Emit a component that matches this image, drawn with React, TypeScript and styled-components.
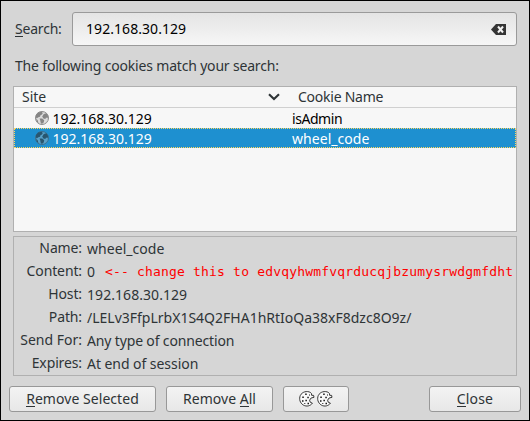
import React from "react";
import styled, { createGlobalStyle, css } from "styled-components";

const GlobalStyle = createGlobalStyle`
  * { box-sizing: border-box; }
  body { margin: 0; }
`;

const Dialog = styled.main`
  width: 530px;
  height: 421px;
  border: 1px solid #000;
  background: #d6d6d6;
  color: #2e3436;
  font: 14px/20px "Noto Sans", "Open Sans", sans-serif;
  display: flex;
  flex-direction: column;
  overflow: hidden;
  white-space: pre;
`;

const Text = styled.span<{ $track?: number }>`
  letter-spacing: ${(p) => p.$track ?? 0}px;
`;

const Key = styled.span`
  box-shadow: 0 1px 0 #2e3436;
  display: inline-block;
  height: 17px;
  line-height: 20px;
`;

const SearchRow = styled.label`
  display: flex;
  align-items: center;
  height: 34px;
  margin: 11px 12px 0 14px;
`;

const SearchLabel = styled.span`
  width: 57px;
  letter-spacing: -0.2px;
`;

const SearchField = styled.div`
  flex: 1;
  height: 34px;
  display: flex;
  align-items: center;
  justify-content: space-between;
  padding: 0 10px 0 13px;
  border: 1px solid #9a9a9a;
  border-radius: 3px;
  background: linear-gradient(#e4e4e4, #f6f6f6);
  color: #000;
`;

const Caption = styled.p`
  margin: 10px 0 11px 14px;
  height: 20px;
  letter-spacing: -0.18px;
`;

const Table = styled.section`
  width: 504px;
  height: 146px;
  margin: -1px 0 0 12px;
  border: 1px solid #b0b0b0;
  background: #f7f7f7;
`;

const columns = css`
  display: grid;
  grid-template-columns: 278px 1fr;
`;

const HeaderRow = styled.div`
  ${columns}
  height: 21px;
  border-bottom: 1px solid #d0d0d0;
`;

const HeaderCell = styled.div`
  display: flex;
  align-items: center;
  justify-content: space-between;
  padding: 0 12px 0 8px;

  & + & { padding-left: 6px; }
`;

const Row = styled.div<{ $selected?: boolean }>`
  ${columns}
  height: 20px;
  color: ${(p) => (p.$selected ? "#fff" : "#000")};
  background: ${(p) => (p.$selected ? "#1e90d0" : "transparent")};
  outline: ${(p) => (p.$selected ? "1px dotted #ffd75e" : "none")};
  outline-offset: -1px;

  ${Text} { margin-top: 1px; }
`;

const SiteCell = styled.div`
  display: flex;
  align-items: flex-start;
  gap: 3.5px;
  padding-left: 21px;

  svg { margin-top: 3px; }
`;

const Details = styled.dl`
  width: 504px;
  height: 140px;
  margin: 4px 0 0 12px;
  padding-top: 1px;
  border: 1px solid #b0b0b0;
`;

const Detail = styled.div`
  display: grid;
  grid-template-columns: 68px 1fr;
  column-gap: 5px;
  height: 23px;
`;

const Term = styled.dt`
  text-align: right;
`;

const Value = styled.dd`
  margin: 1px 0 0;
  display: flex;
`;

const Note = styled.span`
  margin-left: 10px;
  color: #f00;
  font: 13px/20px "DejaVu Sans Mono", monospace;
  letter-spacing: 0.18px;
`;

const Actions = styled.footer`
  display: flex;
  gap: 10px;
  margin: 10px 8px 0;
`;

const Button = styled.button<{ $width: number }>`
  width: ${(p) => p.$width}px;
  height: 26px;
  padding: 0;
  display: flex;
  align-items: center;
  justify-content: center;
  border: 1px solid #989898;
  border-radius: 3px;
  background: linear-gradient(#f3f3f3, #e7e7e7);
  color: inherit;
  font: inherit;

  &:last-child { margin-left: auto; }
`;

const GlobeIcon = ({ selected }: { selected?: boolean }) => (
  <svg width="14" height="14" viewBox="0 0 14 14">
    <circle cx="7" cy="7" r="6.5" fill={selected ? "#58a0c8" : "#dcdcdc"} stroke={selected ? "#3b6f8e" : "#8b8b8b"} />
    <path
      d="M1 4 3 1.6 6.6.7 7.8 2 7 3.6 5.5 4.2 5 5.8 3.4 6.2 1.6 7.4.8 6ZM8.8 3 11.4 2.2 13.2 5 12.5 7.2 11 6.4 10.4 8 8.4 7.5 7.2 5.5ZM4.5 7.6 7.2 7.4 9.2 9.2 8.7 11.5 6.8 13 5.6 11.6 5.3 9.5ZM1 8 2.6 9 3.4 12 1.8 10.8Z"
      fill={selected ? "#28566f" : "#858585"}
    />
  </svg>
);

const ClearIcon = () => (
  <svg width="15" height="11" viewBox="0 0 15 11">
    <path d="M0 5.5 5 0H15V11H5Z" fill="#353535" />
    <path d="M7 2.5 12 8.5M12 2.5 7 8.5" stroke="#f2f2f2" strokeWidth="2" />
  </svg>
);

const SortIcon = () => (
  <svg width="12" height="8" viewBox="0 0 12 8">
    <path d="M1 1.2 6 6 11 1.2" fill="none" stroke="#2e3436" strokeWidth="2.1" />
  </svg>
);

const CookieIcon = () => (
  <svg width="18" height="18" viewBox="0 0 18 18">
    <path
      d="M12.5 2.5C8.9.5 4.1 1.8 2.3 5.5.8 9 2 13.1 5.4 15.1 8.6 16.9 12.4 16 14.4 13.2L12.2 12.2 11.6 10.2 13.1 8 16 7.3 15.6 5.4 13.6 5.3 13.5 3.7Z"
      fill="#fafafa"
      stroke="#222"
      strokeWidth="0.9"
    />
    <path
      d="M7.2 3.5h1.5V5H7.2ZM4.3 6.4h1.5v1.5H4.3ZM9.3 6.8h1.5v1.5H9.3ZM4 10.3h1.5v1.5H4ZM7.4 9.8h1.5v1.5H7.4ZM9.5 12.7H11v1.5H9.5ZM6.3 13h1v1h-1ZM11 4.4h1v1h-1Z"
      fill="#151515"
    />
  </svg>
);

const details = [
  { term: "Name:", value: "wheel_code", track: 0.05 },
  { term: "Content:", value: "0", note: "<-- change this to edvqyhwmfvqrducqjbzumysrwdgmfdht" },
  { term: "Host:", value: "192.168.30.129", track: 0.06 },
  { term: "Path:", value: "/LELv3FfpLrbX1S4Q2FHA1hRtIoQa38xF8dzc8O9z/", track: 0 },
  { term: "Send For:", value: "Any type of connection", track: -0.15 },
  { term: "Expires:", value: "At end of session", track: -0.05 },
];

export default function App() {
  return (
    <>
      <GlobalStyle />
      <Dialog>
        <SearchRow>
          <SearchLabel><Key>S</Key>earch:</SearchLabel>
          <SearchField>
            <Text $track={0.06}>192.168.30.129</Text>
            <ClearIcon />
          </SearchField>
        </SearchRow>
        <Caption>The following cookies match your search:</Caption>
        <Table>
          <HeaderRow>
            <HeaderCell><Text>Site</Text><SortIcon /></HeaderCell>
            <HeaderCell><Text $track={-0.25}>Cookie Name</Text></HeaderCell>
          </HeaderRow>
          <Row>
            <SiteCell><GlobeIcon /><Text>192.168.30.129</Text></SiteCell>
            <Text $track={-0.45}>isAdmin</Text>
          </Row>
          <Row $selected>
            <SiteCell><GlobeIcon selected /><Text>192.168.30.129</Text></SiteCell>
            <Text $track={0.05}>wheel_code</Text>
          </Row>
        </Table>
        <Details>
          {details.map((d) => (
            <Detail key={d.term}>
              <Term><Text $track={d.term === "Send For:" ? 0 : -0.12}>{d.term}</Text></Term>
              <Value>
                <Text $track={d.track}>{d.value}</Text>
                {d.note && <Note>{d.note}</Note>}
              </Value>
            </Detail>
          ))}
        </Details>
        <Actions>
          <Button $width={147}><Text $track={0.05}><Key>R</Key>emove Selected</Text></Button>
          <Button $width={107}><Text $track={0.02}>Remove <Key>A</Key>ll</Text></Button>
          <Button $width={66} aria-label="Cookies"><CookieIcon /><CookieIcon /></Button>
          <Button $width={92}><Text $track={0.15}><Key>C</Key>lose</Text></Button>
        </Actions>
      </Dialog>
    </>
  );
}
